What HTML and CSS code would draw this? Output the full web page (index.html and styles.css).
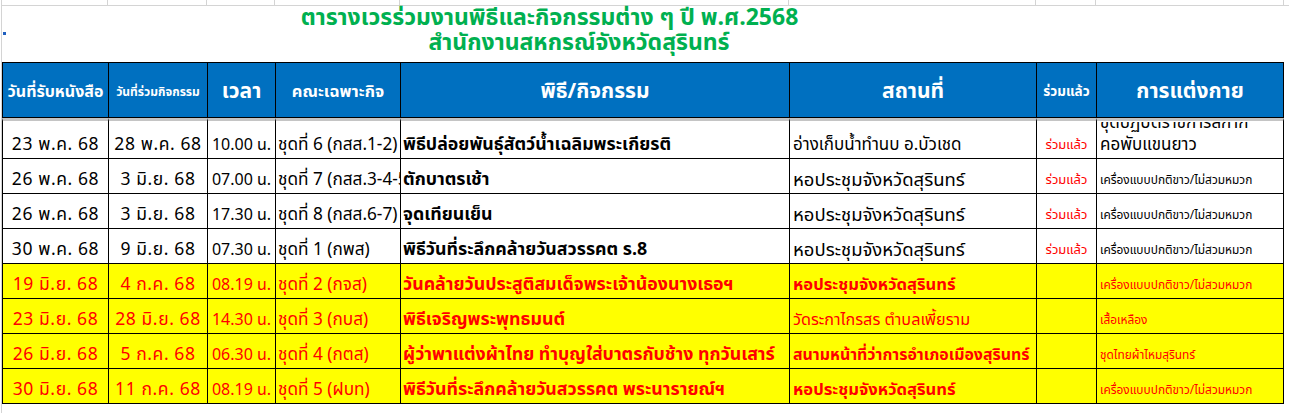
FILE: index.html
```html
<!DOCTYPE html>
<html lang="th">
<head>
<meta charset="utf-8">
<title>ตารางเวรร่วมงานพิธีและกิจกรรมต่าง ๆ ปี พ.ศ.2568</title>
<link rel="stylesheet" href="styles.css">
</head>
<body>
<div class="sheet">
  <div class="gridtop">
    <span class="gc"></span><span class="gc"></span><span class="gc"></span><span class="gc"></span>
    <span class="gc"></span><span class="gc"></span><span class="gc"></span><span class="gc"></span>
    <span class="gc last"></span>
  </div>
  <div class="title">
    <span class="dot"></span>
    <div class="t1">ตารางเวรร่วมงานพิธีและกิจกรรมต่าง ๆ ปี พ.ศ.2568</div>
    <div class="t2">สำนักงานสหกรณ์จังหวัดสุรินทร์</div>
  </div>
  <table class="duty">
    <colgroup>
      <col class="w1"><col class="w2"><col class="w3"><col class="w4">
      <col class="w5"><col class="w6"><col class="w7"><col class="w8">
    </colgroup>
    <thead>
      <tr>
        <th class="h-md">วันที่รับหนังสือ</th>
        <th class="h-sm">วันที่ร่วมกิจกรรม</th>
        <th class="h-lg">เวลา</th>
        <th class="h-md2">คณะเฉพาะกิจ</th>
        <th class="h-lg">พิธี/กิจกรรม</th>
        <th class="h-lg">สถานที่</th>
        <th class="h-xs">ร่วมแล้ว</th>
        <th class="h-lg">การแต่งกาย</th>
      </tr>
    </thead>
    <tbody>
      <tr class="first">
        <td class="date">23 พ.ค. 68</td>
        <td class="date">28 พ.ค. 68</td>
        <td class="time">10.00 น.</td>
        <td class="team">ชุดที่ 6 (กสส.1-2)</td>
        <td class="act">พิธีปล่อยพันธุ์สัตว์น้ำเฉลิมพระเกียรติ</td>
        <td class="place sm">อ่างเก็บน้ำทำนบ อ.บัวเชด</td>
        <td class="done">ร่วมแล้ว</td>
        <td class="dress wrap"><div class="clip">ชุดปฏิบัติราชการสีกากี<br>คอพับแขนยาว</div></td>
      </tr>
      <tr>
        <td class="date">26 พ.ค. 68</td>
        <td class="date">3 มิ.ย. 68</td>
        <td class="time">07.00 น.</td>
        <td class="team">ชุดที่ 7 (กสส.3-4-5)</td>
        <td class="act">ตักบาตรเช้า</td>
        <td class="place">หอประชุมจังหวัดสุรินทร์</td>
        <td class="done">ร่วมแล้ว</td>
        <td class="dress">เครื่องแบบปกติขาว/ไม่สวมหมวก</td>
      </tr>
      <tr>
        <td class="date">26 พ.ค. 68</td>
        <td class="date">3 มิ.ย. 68</td>
        <td class="time">17.30 น.</td>
        <td class="team">ชุดที่ 8 (กสส.6-7)</td>
        <td class="act">จุดเทียนเย็น</td>
        <td class="place">หอประชุมจังหวัดสุรินทร์</td>
        <td class="done">ร่วมแล้ว</td>
        <td class="dress">เครื่องแบบปกติขาว/ไม่สวมหมวก</td>
      </tr>
      <tr>
        <td class="date">30 พ.ค. 68</td>
        <td class="date">9 มิ.ย. 68</td>
        <td class="time">07.30 น.</td>
        <td class="team">ชุดที่ 1 (กพส)</td>
        <td class="act">พิธีวันที่ระลึกคล้ายวันสวรรคต ร.8</td>
        <td class="place">หอประชุมจังหวัดสุรินทร์</td>
        <td class="done">ร่วมแล้ว</td>
        <td class="dress">เครื่องแบบปกติขาว/ไม่สวมหมวก</td>
      </tr>
      <tr class="hl">
        <td class="date">19 มิ.ย. 68</td>
        <td class="date">4 ก.ค. 68</td>
        <td class="time">08.19 น.</td>
        <td class="team">ชุดที่ 2 (กจส)</td>
        <td class="act">วันคล้ายวันประสูติสมเด็จพระเจ้าน้องนางเธอฯ</td>
        <td class="place bold">หอประชุมจังหวัดสุรินทร์</td>
        <td class="done"></td>
        <td class="dress">เครื่องแบบปกติขาว/ไม่สวมหมวก</td>
      </tr>
      <tr class="hl">
        <td class="date">23 มิ.ย. 68</td>
        <td class="date">28 มิ.ย. 68</td>
        <td class="time">14.30 น.</td>
        <td class="team">ชุดที่ 3 (กบส)</td>
        <td class="act">พิธีเจริญพระพุทธมนต์</td>
        <td class="place md">วัดระกาไกรสร ตำบลเพี้ยราม</td>
        <td class="done"></td>
        <td class="dress">เสื้อเหลือง</td>
      </tr>
      <tr class="hl">
        <td class="date">26 มิ.ย. 68</td>
        <td class="date">5 ก.ค. 68</td>
        <td class="time">06.30 น.</td>
        <td class="team">ชุดที่ 4 (กตส)</td>
        <td class="act">ผู้ว่าพาแต่งผ้าไทย ทำบุญใส่บาตรกับช้าง ทุกวันเสาร์</td>
        <td class="place bold long">สนามหน้าที่ว่าการอำเภอเมืองสุรินทร์</td>
        <td class="done"></td>
        <td class="dress">ชุดไทยผ้าไหมสุรินทร์</td>
      </tr>
      <tr class="hl">
        <td class="date">30 มิ.ย. 68</td>
        <td class="date">11 ก.ค. 68</td>
        <td class="time">08.19 น.</td>
        <td class="team">ชุดที่ 5 (ฝบท)</td>
        <td class="act">พิธีวันที่ระลึกคล้ายวันสวรรคต พระนารายณ์ฯ</td>
        <td class="place bold">หอประชุมจังหวัดสุรินทร์</td>
        <td class="done"></td>
        <td class="dress">เครื่องแบบปกติขาว/ไม่สวมหมวก</td>
      </tr>
    </tbody>
  </table>
</div>
</body>
</html>
```

FILE: styles.css
```css
* { box-sizing: border-box; }

html, body {
  margin: 0;
  padding: 0;
  background: #ffffff;
}

body {
  font-family: Tahoma, "Noto Sans Thai", "Noto Sans Thai UI", "Leelawadee UI", "Noto Sans", "DejaVu Sans", sans-serif;
  color: #000000;
  width: 1289px;
  height: 413px;
  overflow: hidden;
}

.sheet {
  margin-left: 1px;
  border-left: 1px solid #d4d4d4;
  min-height: 413px;
}

/* top gridline strip */
.gridtop {
  display: grid;
  grid-template-columns: 106px 99px 68px 125px 389px 247px 60px 188px 1fr;
  height: 6px;
  border-bottom: 1px solid #d4d4d4;
}
.gc { border-right: 1px solid #d4d4d4; }
.gc.last { border-right: 0; }

/* title */
.title {
  position: relative;
  height: 56px;
  color: #00b050;
  font-weight: bold;
  font-size: 23px;
  line-height: 25px;
  padding-top: 0;
}
.t1 { width: 1095px; text-align: center; white-space: nowrap; }
.t2 { width: 1154px; text-align: center; white-space: nowrap; }
.dot {
  position: absolute;
  left: 1px;
  top: 26px;
  width: 3px;
  height: 3px;
  background: #1f5fbf;
}

/* table */
.duty {
  table-layout: fixed;
  border-collapse: separate;
  border-spacing: 0;
  width: 1282px;
}
.w1 { width: 107px; }
.w2 { width: 99px; }
.w3 { width: 68px; }
.w4 { width: 125px; }
.w5 { width: 389px; }
.w6 { width: 247px; }
.w7 { width: 60px; }
.w8 { width: 187px; }

.duty th, .duty td {
  border-right: 1px solid #000;
  border-bottom: 1px solid #000;
  padding: 0;
  overflow: hidden;
  white-space: nowrap;
}
.duty th:first-child, .duty td:first-child { border-left: 1px solid #000; }

.duty th {
  height: 56px;
  border-top: 1px solid #000;
  background: #0070c0;
  color: #ffffff;
  font-weight: bold;
  text-align: center;
  vertical-align: middle;
  padding-top: 3px;
}
.h-lg { font-size: 21px; }
.h-md { font-size: 16px; }
.h-md2 { font-size: 16.5px; }
.h-sm { font-size: 12px; }
.h-xs { font-size: 13.5px; }

.duty td {
  height: 35px;
  vertical-align: bottom;
  line-height: 20px;
  padding-bottom: 3px;
  font-size: 16px;
}
.duty tr.first td {
  height: 41px;
  border-top: 3px solid #c4c4c4;
}

.duty .date { font-size: 17.5px; letter-spacing: 0.6px; text-align: center; }
.duty .time { font-size: 16px; text-align: center; }
.duty .team { font-size: 17.2px; padding-left: 2px; }
.duty .act { font-weight: bold; font-size: 17.8px; padding-left: 2px; }
.duty .place { padding-left: 3px; font-size: 18.5px; }
.duty .place.sm { font-size: 17px; }
.duty .place.md { font-size: 16.2px; }
.duty .place.bold { font-weight: bold; font-size: 16.6px; }
.duty .place.bold.long { font-size: 15.9px; }
.duty .done { color: #ff0000; text-align: center; font-size: 13px; }
.duty .dress { font-size: 11.9px; padding-left: 3px; }

.duty .dress.wrap { font-size: 17px; line-height: 22px; padding-bottom: 0; }
.clip {
  height: 36px;
  overflow: hidden;
  display: flex;
  flex-direction: column;
  justify-content: flex-end;
  padding-bottom: 2px;
}

.duty .hl td {
  background: #ffff00;
  color: #ff0000;
}
```
